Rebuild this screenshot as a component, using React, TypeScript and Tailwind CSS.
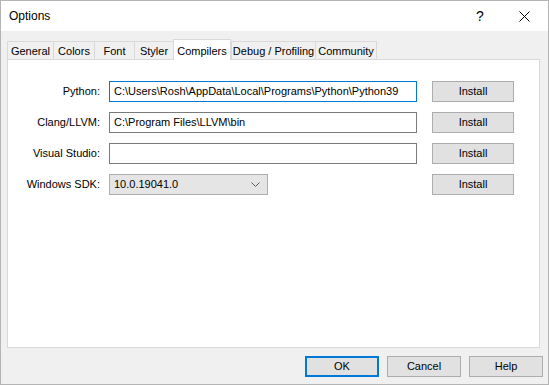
import React from "react";

const font = { fontFamily: '"Liberation Sans", Arial, sans-serif' };

function Field({ value, focused }: { value: string; focused?: boolean }) {
  return (
    <div
      className={`w-[308px] h-[21px] bg-white border flex items-center pl-[4px] text-[11px] text-black whitespace-nowrap overflow-hidden ${
        focused ? "border-[#0078d7]" : "border-[#7a7a7a]"
      }`}
    >
      {value}
    </div>
  );
}

function InstallBtn() {
  return (
    <div className="w-[82px] h-[21px] bg-[#e1e1e1] border border-[#adadad] flex items-center justify-center text-[11px] text-black">
      Install
    </div>
  );
}

function Row({ label, children }: { label: string; children: React.ReactNode }) {
  return (
    <div className="flex items-center h-[21px]">
      <div className="w-[93px] text-right text-[11px] text-black pr-[1px] whitespace-nowrap">{label}</div>
      <div className="ml-[8px] w-[308px] flex">{children}</div>
      <div className="ml-[15px]">
        <InstallBtn />
      </div>
    </div>
  );
}

const tabs = [
  { name: "General", w: 46 },
  { name: "Colors", w: 41 },
  { name: "Font", w: 40 },
  { name: "Styler", w: 39 },
  { name: "Compilers", w: 58, active: true },
  { name: "Debug / Profiling", w: 84 },
  { name: "Community", w: 62, last: true },
];

export default function App() {
  return (
    <div
      className="w-[549px] h-[385px] border border-[#b4b4b4] bg-[#f0f0f0] flex flex-col text-black"
      style={font}
    >
      <div className="h-[30px] bg-white flex items-center shrink-0">
        <div className="pl-[8px] text-[12px] flex-1">Options</div>
        <div className="w-[20px] text-center text-[14px] mr-[29px]">?</div>
        <svg width="11" height="11" viewBox="0 0 11 11" className="mr-[18px]">
          <path d="M0.5 0.5 L10.5 10.5 M10.5 0.5 L0.5 10.5" stroke="#000" strokeWidth="1" />
        </svg>
      </div>
      <div className="px-[6px] pt-[7px] flex flex-col">
        <div className="flex items-end h-[21px] relative z-10">
          {tabs.map((t) =>
            t.active ? (
              <div
                key={t.name}
                style={{ width: t.w }}
                className="h-[21px] -mb-px bg-white border border-[#d9d9d9] border-b-0 flex items-start justify-center pt-[3px] text-[11px] whitespace-nowrap"
              >
                {t.name}
              </div>
            ) : (
              <div
                key={t.name}
                style={{ width: t.w }}
                className={`h-[18px] bg-[#f0f0f0] border-t border-l border-[#d9d9d9] flex items-center justify-center pt-[1px] text-[11px] whitespace-nowrap ${
                  t.last ? "border-r" : ""
                }`}
              >
                {t.name}
              </div>
            )
          )}
        </div>
        <div className="w-[533px] h-[289px] bg-white border border-[#d9d9d9] flex flex-col gap-[10px] pt-[21px]">
          <Row label="Python:">
            <Field value="C:\Users\Rosh\AppData\Local\Programs\Python\Python39" focused />
          </Row>
          <Row label="Clang/LLVM:">
            <Field value="C:\Program Files\LLVM\bin" />
          </Row>
          <Row label="Visual Studio:">
            <Field value="" />
          </Row>
          <Row label="Windows SDK:">
            <div className="w-[159px] h-[21px] bg-[#e5e5e5] border border-[#adadad] flex items-center pl-[4px] text-[11px]">
              <span className="flex-1">10.0.19041.0</span>
              <svg width="9" height="5" viewBox="0 0 9 5" className="mr-[7px]">
                <path d="M0.5 0.5 L4.5 4.5 L8.5 0.5" stroke="#5a5a5a" fill="none" strokeWidth="1" />
              </svg>
            </div>
          </Row>
        </div>
        <div className="flex justify-end gap-[8px] mt-[8px] -mr-px">
          <div className="w-[74px] h-[21px] bg-[#e1e1e1] border-2 border-[#0078d7] flex items-center justify-center text-[11px]">
            OK
          </div>
          <div className="w-[74px] h-[21px] bg-[#e1e1e1] border border-[#adadad] flex items-center justify-center text-[11px]">
            Cancel
          </div>
          <div className="w-[74px] h-[21px] bg-[#e1e1e1] border border-[#adadad] flex items-center justify-center text-[11px]">
            Help
          </div>
        </div>
      </div>
    </div>
  );
}
